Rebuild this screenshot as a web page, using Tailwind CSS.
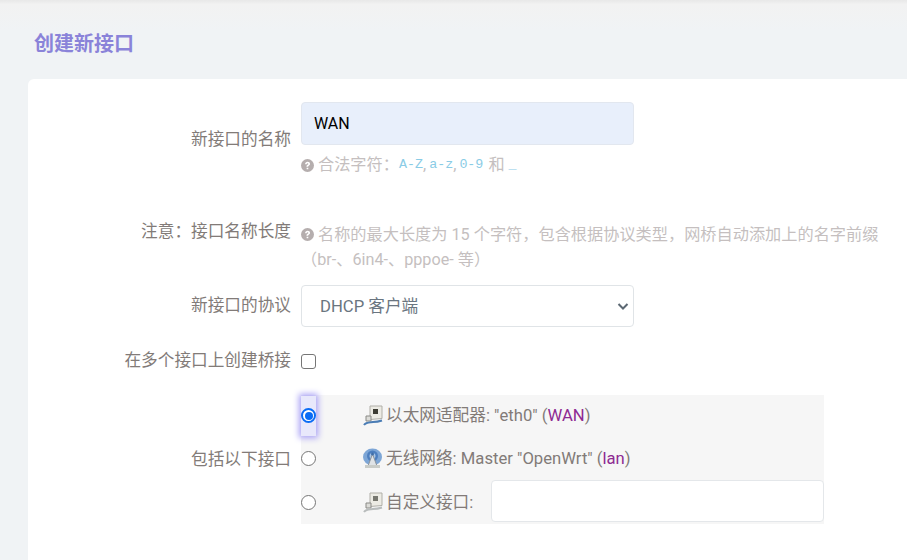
<!DOCTYPE html>
<html lang="zh">
<head>
<meta charset="utf-8">
<script src="https://cdn.jsdelivr.net/npm/@tailwindcss/browser@4"></script>
</head>
<body class="m-0 h-[560px] w-[907px] overflow-hidden bg-[#f0f3f5] font-['Roboto','Noto_Sans_CJK_SC',sans-serif] text-[16.67px] text-[#6c6c6c]">
<div class="h-[30px] bg-gradient-to-b from-[#e8e8e8] from-[0%] via-[#f2f2f2] via-[15%] to-[#f0f3f5]"></div>
<h2 class="m-0 pl-[34px] h-[49px] text-[20px] leading-[28px] font-bold text-[#8a83d9]">创建新接口</h2>
<main class="ml-[28px] h-[481px] rounded-tl-[6px] bg-white pt-[23px]">
  <section class="flex items-center h-[74px] mb-[45px]">
    <label class="w-[263px] pt-[1px] text-right text-[#827b78] leading-[24px]">新接口的名称</label>
    <div class="ml-[10px] w-[333px] self-start">
      <input value="WAN" class="block w-full h-[43px] rounded-[4px] border border-[#e2e7ef] bg-[#e8effb] px-[12px] text-[16px] text-black outline-none">
      <p class="m-0 mt-[8px] flex items-center h-[24px] text-[16.2px] text-[#c5bfbf] whitespace-nowrap">
        <svg class="w-[13px] h-[13px] mr-[4px] shrink-0" viewBox="0 0 24 24"><circle cx="12" cy="12" r="12" fill="#b5aeae"/><path d="M7.500 9.500c0-2.700 2-4.500 4.700-4.500 2.600 0 4.500 1.600 4.500 3.900 0 1.800-1 2.700-2.300 3.500-1 .6-1.300 1.100-1.300 2.100h-3c0-2 .7-2.900 2-3.700.9-.6 1.400-1 1.400-1.800 0-.8-.6-1.300-1.400-1.300-.9 0-1.500.7-1.600 1.800H7.500zM10.400 16h3.100v3h-3.100z" fill="#fff"/></svg>
        <span class="w-[81px] shrink-0">合法字符：</span><code class="font-['Liberation_Mono',monospace] text-[13.33px] text-[#8accE6]">A-Z</code><span>,</span><code class="ml-[3px] font-['Liberation_Mono',monospace] text-[13.33px] text-[#8acce6]">a-z</code><span>,</span><code class="ml-[3px] font-['Liberation_Mono',monospace] text-[13.33px] text-[#8acce6]">0-9</code><span class="ml-[5px] mr-[4px]">和</span><code class="font-['Liberation_Mono',monospace] text-[13.33px] text-[#8acce6]">_</code>
      </p>
    </div>
  </section>
  <section class="flex h-[64px]">
    <label class="w-[263px] text-right text-[#827b78] leading-[24px] -mt-[1px]">注意：接口名称长度</label>
    <p class="m-0 ml-[10px] pt-[1px] w-[590px] text-[16.2px] leading-[25px] text-[#c5bfbf] whitespace-nowrap">
      <svg class="inline-block align-[-1px] w-[13px] h-[13px] mr-[4px]" viewBox="0 0 24 24"><circle cx="12" cy="12" r="12" fill="#b5aeae"/><path d="M7.500 9.500c0-2.700 2-4.500 4.700-4.500 2.600 0 4.500 1.600 4.500 3.900 0 1.800-1 2.700-2.300 3.500-1 .6-1.300 1.100-1.300 2.100h-3c0-2 .7-2.900 2-3.700.9-.6 1.400-1 1.400-1.800 0-.8-.6-1.300-1.400-1.300-.9 0-1.500.7-1.600 1.800H7.500zM10.400 16h3.100v3h-3.100z" fill="#fff"/></svg>名称的最大长度为 15 个字符，包含根据协议类型，网桥自动添加上的名字前缀<br>（br-、6in4-、pppoe- 等）
    </p>
  </section>
  <section class="flex items-center h-[42px] mb-[15px]">
    <label class="w-[263px] text-right text-[#827b78] leading-[24px]">新接口的协议</label>
    <div class="ml-[10px] relative w-[333px] h-[42px] rounded-[4px] border border-[#e0e4e7] bg-white px-[18px] pt-[1px] flex items-center text-[#6a7580]">
      <span>DHCP 客户端</span>
      <svg class="absolute right-[4px] top-[14px] w-[12px] h-[12px]" viewBox="0 0 12 12"><path d="M1.500 4l4.500 4.500L10.500 4" fill="none" stroke="#5c6873" stroke-width="2"/></svg>
    </div>
  </section>
  <section class="flex items-center h-[38px] mb-[15px]">
    <label class="w-[263px] text-right text-[#827b78] leading-[24px]">在多个接口上创建桥接</label>
    <span class="ml-[10px] block w-[15px] h-[15px] rounded-[3px] border-[1.5px] border-[#767676] bg-white"></span>
  </section>
  <section class="flex items-center">
    <label class="w-[263px] text-right text-[#827b78] leading-[24px]">包括以下接口</label>
    <div class="ml-[10px] w-[523px] h-[129px] bg-[#f6f6f6] relative">
      <div class="flex items-center h-[41px]">
        <span class="w-[15px] h-[40px] flex items-center justify-center bg-[#e8e8fb] shadow-[0_0_6px_2px_#a8a0f5]">
          <span class="block w-[15px] h-[15px] shrink-0 rounded-full border-2 border-[#0a6cf5] bg-white p-[1.500px]"><span class="block w-full h-full rounded-full bg-[#0a6cf5]"></span></span>
        </span>
        <svg class="ml-[47px] w-[21px] h-[21px] shrink-0" viewBox="0 0 21 21"><path d="M7 1h12v12.500l-12 1z" fill="#ecebe4" stroke="#b0afa8"/><rect x="10" y="4" width="5" height="5" fill="#3d3d34"/><path d="M3 11h5v5H3z" fill="#dcdcd8" stroke="#8a8a86"/><path d="M1 20c2-3 6-2.500 9-3 3 0 6-.5 9-1.500" fill="none" stroke="#4b7db5" stroke-width="2"/></svg>
        <span class="ml-[3px] -translate-x-px text-[#827b78] whitespace-nowrap">以太网适配器: "eth0" (<span class="text-[#8e2a92]">WAN</span>)</span>
      </div>
      <div class="flex items-center h-[43px] mt-[1px]">
        <span class="block w-[15px] h-[15px] rounded-full border-[1.5px] border-[#767676] bg-white"></span>
        <svg class="ml-[47px] -translate-x-px w-[21px] h-[21px] shrink-0" viewBox="0 0 21 21"><ellipse cx="10.500" cy="9" rx="9.500" ry="8.500" fill="#7da6d6"/><circle cx="10.500" cy="8" r="5.500" fill="#4d7fbf"/><circle cx="10.500" cy="8" r="3" fill="#a8c6e8"/><path d="M10.500 6l4.500 12H6z" fill="#dfe3e6" stroke="#8d949c"/><circle cx="10.500" cy="6" r="1.500" fill="#3f6ea8"/><rect x="3" y="17" width="15" height="3" fill="#c9ccc8"/></svg>
        <span class="ml-[3px] -translate-x-px text-[#827b78] whitespace-nowrap">无线网络: Master "OpenWrt" (<span class="text-[#8e2a92]">lan</span>)</span>
      </div>
      <div class="flex items-start h-[44px]">
        <span class="block mt-[15px] w-[15px] h-[15px] rounded-full border-[1.5px] border-[#767676] bg-white"></span>
        <svg class="ml-[47px] mt-[12px] w-[21px] h-[21px] shrink-0" viewBox="0 0 21 21"><path d="M7 1h12v12.500l-12 1z" fill="#ecebe4" stroke="#b0afa8"/><rect x="10" y="4" width="5" height="5" fill="#77776f"/><path d="M3 11h5v5H3z" fill="#dcdcd8" stroke="#8a8a86"/><path d="M1 20c2-3 6-2.500 9-3 3 0 6-.5 9-1.500" fill="none" stroke="#b8bcbc" stroke-width="2"/></svg>
        <span class="ml-[3px] -translate-x-px mt-[10px] text-[#827b78] whitespace-nowrap">自定义接口:</span>
        <span class="ml-auto block w-[333px] h-[42px] rounded-[4px] border border-[#e4e7ea] bg-white"></span>
      </div>
    </div>
  </section>
</main>
</body>
</html>
